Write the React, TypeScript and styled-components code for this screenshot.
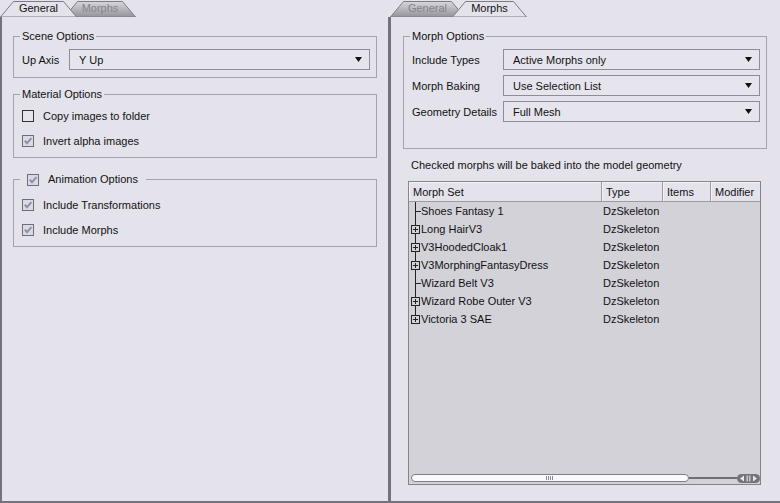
import React from 'react';
import styled, { createGlobalStyle } from 'styled-components';

const GlobalStyle = createGlobalStyle`
  html, body {
    margin: 0;
    padding: 0;
    background: #e4e3ec;
  }
  body {
    font-family: "Liberation Sans", Arial, sans-serif;
    font-size: 11px;
    color: #111;
  }
`;

const morphSets = [
  { name: 'Shoes Fantasy 1', kids: false },
  { name: 'Long HairV3', kids: true },
  { name: 'V3HoodedCloak1', kids: true },
  { name: 'V3MorphingFantasyDress', kids: true },
  { name: 'Wizard Belt V3', kids: false },
  { name: 'Wizard Robe Outer V3', kids: true },
  { name: 'Victoria 3 SAE', kids: true },
];

const Tab: React.FC<{ label: string; width: number; active?: boolean; overlap?: boolean }> = ({
  label,
  width,
  active,
  overlap,
}) => {
  const id = `tabfill-${label}-${width}`;
  return (
    <TabWrap $width={width} $active={!!active} $overlap={!!overlap}>
      <TabShape width={width} height={17}>
        <defs>
          <linearGradient id={id} x1="0" y1="0" x2="0" y2="1">
            <stop offset="0" stopColor="#d8d7de" />
            <stop offset="1" stopColor="#94939b" />
          </linearGradient>
        </defs>
        <polygon
          points={`0.5,17 13.5,1.5 ${width - 13.5},1.5 ${width - 0.5},17`}
          fill={active ? '#e4e3ec' : `url(#${id})`}
          stroke="#7c7b84"
          strokeWidth={1}
        />
      </TabShape>
      <TabLabel>{label}</TabLabel>
    </TabWrap>
  );
};

const Combo: React.FC<{ value: string }> = ({ value }) => (
  <ComboBox>
    <ComboText>{value}</ComboText>
    <svg width={7} height={5}>
      <polygon points="0,0 7,0 3.5,5" fill="#111" />
    </svg>
  </ComboBox>
);

const Check: React.FC<{ checked?: boolean }> = ({ checked }) => (
  <CheckSvg width={12} height={12}>
    <rect
      x={0.5}
      y={0.5}
      width={11}
      height={11}
      fill={checked ? '#dbdae2' : '#e6e5ee'}
      stroke={checked ? '#6f6e77' : '#333'}
    />
    {checked && (
      <path d="M2.8 5.6 L5 8.2 L9.4 3.2" fill="none" stroke="#8a90b0" strokeWidth={2} />
    )}
  </CheckSvg>
);

const TreeGutter: React.FC<{ kids: boolean; last: boolean }> = ({ kids, last }) => (
  <svg width={12} height={18} style={{ flex: 'none' }}>
    <line x1={6.5} y1={0} x2={6.5} y2={last ? 9 : 18} stroke="#222" />
    {kids ? (
      <>
        <rect x={2.5} y={5.5} width={8} height={8} fill="#d3d2d9" stroke="#222" />
        <line x1={4} y1={9.5} x2={9} y2={9.5} stroke="#222" />
        <line x1={6.5} y1={7} x2={6.5} y2={12} stroke="#222" />
      </>
    ) : (
      <line x1={6} y1={9.5} x2={12} y2={9.5} stroke="#222" />
    )}
  </svg>
);

const App: React.FC = () => {
  return (
    <>
      <GlobalStyle />
      <Page>
        <Panel $width={390}>
          <TabBar>
            <Tab label="General" width={77} active />
            <Tab label="Morphs" width={72} overlap />
          </TabBar>
          <PanelBody $left={2} $right={2} $padLeft={11} $padRight={11}>
            <Group $mt={0} $pt={6} $pb={7}>
              <Legend>Scene Options</Legend>
              <FormRow>
                <FieldLabel $width={47}>Up Axis</FieldLabel>
                <Combo value="Y Up" />
              </FormRow>
            </Group>

            <Group $mt={10} $pt={6} $pb={7} $gap={7}>
              <Legend>Material Options</Legend>
              <CheckRow>
                <Check />
                <span>Copy images to folder</span>
              </CheckRow>
              <CheckRow>
                <Check checked />
                <span>Invert alpha images</span>
              </CheckRow>
            </Group>

            <Group $mt={15} $pt={10} $pb={7} $gap={7}>
              <CheckLegend>
                <Check checked />
                <span>Animation Options</span>
              </CheckLegend>
              <CheckRow>
                <Check checked />
                <span>Include Transformations</span>
              </CheckRow>
              <CheckRow>
                <Check checked />
                <span>Include Morphs</span>
              </CheckRow>
            </Group>
          </PanelBody>
        </Panel>

        <Panel>
          <TabBar>
            <Tab label="General" width={75} />
            <Tab label="Morphs" width={75} active overlap />
          </TabBar>
          <PanelBody $left={1} $right={0} $padLeft={12} $padRight={13}>
            <Group $mt={0} $pt={6} $pb={26} $gap={5}>
              <Legend>Morph Options</Legend>
              <FormRow>
                <FieldLabel $width={91}>Include Types</FieldLabel>
                <Combo value="Active Morphs only" />
              </FormRow>
              <FormRow>
                <FieldLabel $width={91}>Morph Baking</FieldLabel>
                <Combo value="Use Selection List" />
              </FormRow>
              <FormRow>
                <FieldLabel $width={91}>Geometry Details</FieldLabel>
                <Combo value="Full Mesh" />
              </FormRow>
            </Group>

            <InfoText>Checked morphs will be baked into the model geometry</InfoText>

            <Tree>
              <TreeHeader>
                <HeaderCell $width={193}>Morph Set</HeaderCell>
                <HeaderCell $width={61}>Type</HeaderCell>
                <HeaderCell $width={48}>Items</HeaderCell>
                <HeaderCell $last>Modifier</HeaderCell>
              </TreeHeader>
              {morphSets.map((m, i) => (
                <TreeRow key={m.name}>
                  <NameCell>
                    <TreeGutter kids={m.kids} last={i === morphSets.length - 1} />
                    <span>{m.name}</span>
                  </NameCell>
                  <TypeCell>DzSkeleton</TypeCell>
                </TreeRow>
              ))}
              <TreeFill />
              <ScrollBar>
                <Thumb>
                  <svg width={8} height={4}>
                    <line x1={0.5} y1={0} x2={0.5} y2={4} stroke="#8a8990" />
                    <line x1={2.5} y1={0} x2={2.5} y2={4} stroke="#8a8990" />
                    <line x1={4.5} y1={0} x2={4.5} y2={4} stroke="#8a8990" />
                    <line x1={6.5} y1={0} x2={6.5} y2={4} stroke="#8a8990" />
                  </svg>
                </Thumb>
                <Track />
                <svg width={23} height={9} style={{ flex: 'none' }}>
                  <rect x={0} y={0} width={23} height={9} rx={4.5} fill="#74737c" />
                  <polygon points="3,4.5 7,1.5 7,7.5" fill="#e8e7ee" />
                  <polygon points="20,4.5 16,1.5 16,7.5" fill="#e8e7ee" />
                  <rect x={9.5} y={1.5} width={1.5} height={6} fill="#c9c8d0" />
                  <rect x={12} y={1.5} width={1.5} height={6} fill="#c9c8d0" />
                </svg>
              </ScrollBar>
            </Tree>
          </PanelBody>
        </Panel>
      </Page>
    </>
  );
};

export default App;

const Page = styled.div`
  display: flex;
  width: 780px;
  height: 503px;
  background: #e4e3ec;
  overflow: hidden;
`;

const Panel = styled.div<{ $width?: number }>`
  display: flex;
  flex-direction: column;
  ${(p) => (p.$width ? `width: ${p.$width}px; flex: none;` : 'flex: 1; min-width: 0;')}
`;

const TabBar = styled.div`
  display: flex;
  height: 17px;
  flex: none;
`;

const TabWrap = styled.div<{ $width: number; $active: boolean; $overlap: boolean }>`
  position: relative;
  flex: none;
  width: ${(p) => p.$width}px;
  height: 17px;
  margin-left: ${(p) => (p.$overlap ? '-13px' : '0')};
  z-index: ${(p) => (p.$active ? 2 : 1)};
  display: flex;
  align-items: center;
  justify-content: center;
  color: ${(p) => (p.$active ? '#111' : '#84838b')};
`;

const TabShape = styled.svg`
  position: absolute;
  left: 0;
  top: 0;
`;

const TabLabel = styled.span`
  position: relative;
  line-height: 13px;
`;

const PanelBody = styled.div<{ $left: number; $right: number; $padLeft: number; $padRight: number }>`
  flex: 1;
  display: flex;
  flex-direction: column;
  border-left: ${(p) => p.$left}px solid #74737c;
  border-right: ${(p) => p.$right}px solid #74737c;
  border-bottom: 2px solid #74737c;
  padding: 13px ${(p) => p.$padRight}px 16px ${(p) => p.$padLeft}px;
  min-height: 0;
`;

const Group = styled.fieldset<{ $mt: number; $pt: number; $pb: number; $gap?: number }>`
  margin: ${(p) => p.$mt}px 0 0 0;
  padding: ${(p) => p.$pt}px 6px ${(p) => p.$pb}px 8px;
  border: 1px solid #a4a3ab;
  min-width: 0;
  display: flex;
  flex-direction: column;
  gap: ${(p) => p.$gap ?? 0}px;
`;

const Legend = styled.legend`
  margin-left: -2px;
  padding: 0 2px;
  line-height: 13px;
  font-size: 11px;
`;

const CheckLegend = styled.legend`
  margin-left: -2px;
  padding: 0 8px 0 7px;
  line-height: 13px;
  height: 13px;
  font-size: 11px;
  display: flex;
  align-items: center;
  gap: 9px;
`;

const FormRow = styled.div`
  display: flex;
  align-items: center;
  height: 21px;
`;

const FieldLabel = styled.span<{ $width: number }>`
  flex: none;
  width: ${(p) => p.$width}px;
`;

const ComboBox = styled.div`
  flex: 1;
  height: 21px;
  box-sizing: border-box;
  border: 1px solid #8e8d96;
  background: #e6e5ee;
  display: flex;
  align-items: center;
  padding: 0 7px 0 9px;
`;

const ComboText = styled.span`
  flex: 1;
`;

const CheckRow = styled.div`
  display: flex;
  align-items: center;
  height: 18px;
  gap: 9px;
`;

const CheckSvg = styled.svg`
  flex: none;
  display: block;
`;

const InfoText = styled.div`
  margin: 10px 0 0 8px;
  line-height: 13px;
`;

const Tree = styled.div`
  flex: 1;
  margin: 9px 6px 0 5px;
  border: 1px solid #85848c;
  background: #d3d2d9;
  display: flex;
  flex-direction: column;
  min-height: 0;
`;

const TreeHeader = styled.div`
  display: flex;
  height: 19px;
  flex: none;
  background: #e4e3ec;
  border-bottom: 1px solid #9c9ba3;
`;

const HeaderCell = styled.div<{ $width?: number; $last?: boolean }>`
  box-sizing: border-box;
  ${(p) => (p.$width ? `width: ${p.$width}px; flex: none;` : 'flex: 1;')}
  border-right: ${(p) => (p.$last ? 'none' : '1px solid #9c9ba3')};
  box-shadow: inset 1px 1px 0 #f4f3f8;
  padding-left: 4px;
  display: flex;
  align-items: center;
`;

const TreeRow = styled.div`
  display: flex;
  height: 18px;
  flex: none;
`;

const NameCell = styled.div`
  width: 193px;
  flex: none;
  display: flex;
  align-items: center;
`;

const TypeCell = styled.div`
  width: 61px;
  flex: none;
  padding-left: 1px;
  display: flex;
  align-items: center;
`;

const TreeFill = styled.div`
  flex: 1;
`;

const ScrollBar = styled.div`
  display: flex;
  align-items: center;
  height: 10px;
  flex: none;
  padding: 0 0 1px 2px;
`;

const Thumb = styled.div`
  flex: none;
  width: 278px;
  height: 8px;
  box-sizing: border-box;
  border: 1px solid #7f7e87;
  border-radius: 4px;
  background: #fafafc;
  display: flex;
  align-items: center;
  justify-content: center;
`;

const Track = styled.div`
  flex: 1;
  height: 2px;
  background: #6f6e77;
`;
